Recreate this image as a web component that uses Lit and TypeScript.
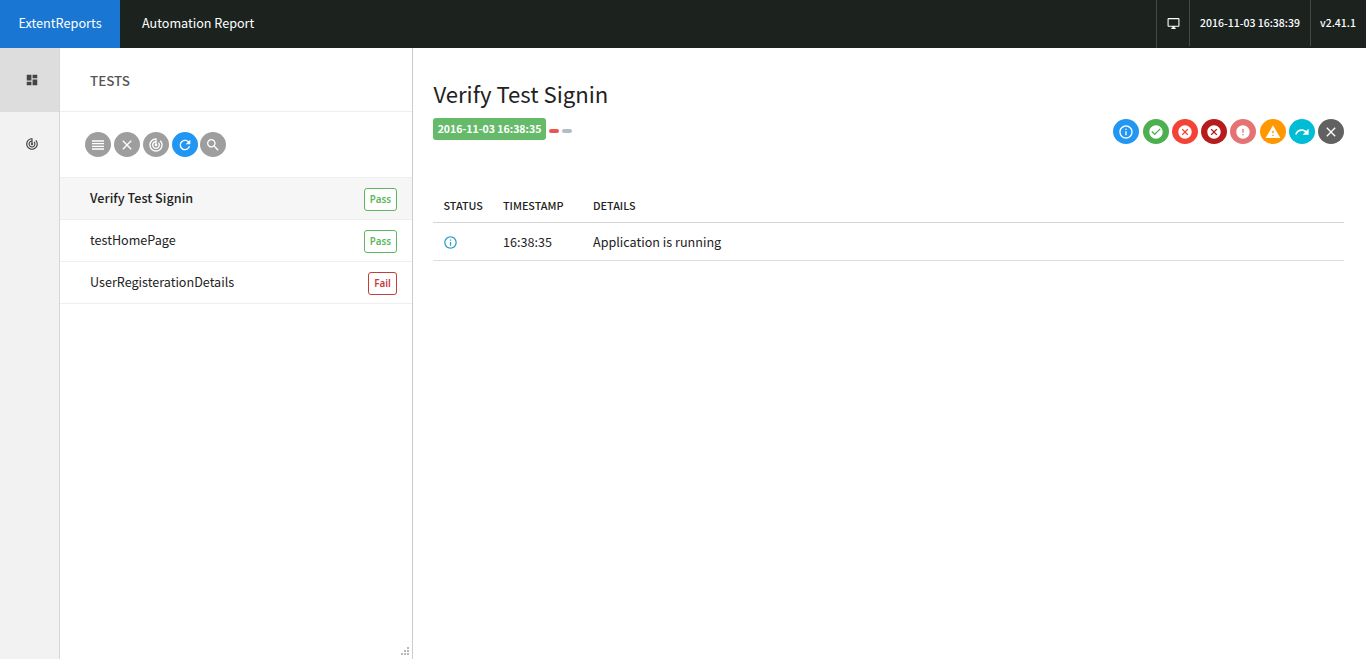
import { LitElement, html, css, svg } from "lit";
import { customElement, property, state } from "lit/decorators.js";
import { classMap } from "lit/directives/class-map.js";

const ICONS: Record<string, string> = {
  dashboard: "M3 13h8V3H3v10zm0 8h8v-6H3v6zm10 0h8V11h-8v10zm0-18v6h8V3h-8z",
  track:
    "M19.07 4.93l-1.41 1.41C19.1 7.79 20 9.79 20 12c0 4.42-3.58 8-8 8s-8-3.58-8-8c0-4.08 3.05-7.44 7-7.93v2.02C8.16 6.57 6 9.03 6 12c0 3.31 2.69 6 6 6s6-2.69 6-6c0-1.66-.67-3.16-1.76-4.24l-1.41 1.41C15.55 9.9 16 10.9 16 12c0 2.21-1.79 4-4 4s-4-1.79-4-4c0-1.86 1.28-3.41 3-3.86v2.14c-.6.35-1 .98-1 1.72 0 1.1.9 2 2 2s2-.9 2-2c0-.74-.4-1.38-1-1.72V2h-1C6.48 2 2 6.48 2 12s4.48 10 10 10 10-4.48 10-10c0-2.76-1.12-5.26-2.93-7.07z",
  lines: "M3 15h18v-2H3v2zm0 4h18v-2H3v2zm0-8h18V9H3v2zm0-6v2h18V5H3z",
  close:
    "M19 6.41L17.59 5 12 10.59 6.41 5 5 6.41 10.59 12 5 17.59 6.41 19 12 13.41 17.59 19 19 17.59 13.41 12z",
  refresh:
    "M17.65 6.35C16.2 4.9 14.21 4 12 4c-4.42 0-7.99 3.58-7.99 8s3.57 8 7.99 8c3.73 0 6.84-2.55 7.73-6h-2.08c-.82 2.33-3.04 4-5.65 4-3.31 0-6-2.69-6-6s2.69-6 6-6c1.66 0 3.14.69 4.22 1.78L13 11h7V4l-2.35 2.35z",
  search:
    "M15.5 14h-.79l-.28-.27C15.41 12.59 16 11.11 16 9.5 16 5.91 13.09 3 9.5 3S3 5.91 3 9.5 5.91 16 9.5 16c1.61 0 3.09-.59 4.23-1.57l.27.28v.79l5 4.99L20.49 19l-4.99-5zm-6 0C7.01 14 5 11.99 5 9.5S7.01 5 9.5 5 14 7.01 14 9.5 11.99 14 9.5 14z",
  info: "M11 17h2v-6h-2v6zm1-15C6.48 2 2 6.48 2 12s4.48 10 10 10 10-4.48 10-10S17.52 2 12 2zm0 18c-4.41 0-8-3.59-8-8s3.59-8 8-8 8 3.59 8 8-3.59 8-8 8zM11 9h2V7h-2v2z",
  check:
    "M12 2C6.48 2 2 6.48 2 12s4.48 10 10 10 10-4.48 10-10S17.52 2 12 2zm-2 15l-5-5 1.41-1.41L10 14.17l7.59-7.59L19 8l-9 9z",
  cancel:
    "M12 2C6.47 2 2 6.47 2 12s4.47 10 10 10 10-4.47 10-10S17.53 2 12 2zm5 13.59L15.59 17 12 13.41 8.41 17 7 15.59 10.59 12 7 8.41 8.41 7 12 10.59 15.59 7 17 8.41 13.41 12 17 15.59z",
  error:
    "M12 2C6.48 2 2 6.48 2 12s4.48 10 10 10 10-4.48 10-10S17.52 2 12 2zm1 15h-2v-2h2v2zm0-4h-2V7h2v6z",
  warning: "M1 21h22L12 2 1 21zm12-3h-2v-2h2v2zm0-4h-2v-4h2v4z",
  redo: "M18.4 10.6C16.55 8.99 14.15 8 11.5 8c-4.65 0-8.58 3.03-9.96 7.22L3.9 16c1.05-3.19 4.05-5.5 7.6-5.5 1.95 0 3.73.72 5.12 1.88L13 16h9V7l-3.6 3.6z",
  desktop:
    "M21 2H3c-1.1 0-2 .9-2 2v12c0 1.1.9 2 2 2h7v2H8v2h8v-2h-2v-2h7c1.1 0 2-.9 2-2V4c0-1.1-.9-2-2-2zm0 14H3V4h18v12z",
};

@customElement("md-icon")
export class MdIcon extends LitElement {
  @property() name = "";
  static styles = css`
    :host { display: block; width: 16px; height: 16px; flex: none; }
    svg { display: block; width: 100%; height: 100%; fill: currentColor; }
  `;
  render() {
    return html`<svg viewBox="0 0 24 24">${svg`<path d=${ICONS[this.name] ?? ""}></path>`}</svg>`;
  }
}

interface Test { name: string; status: "Pass" | "Fail"; }

@customElement("app-root")
export class AppRoot extends LitElement {
  @state() private selected = 0;

  private tests: Test[] = [
    { name: "Verify Test Signin", status: "Pass" },
    { name: "testHomePage", status: "Pass" },
    { name: "UserRegisterationDetails", status: "Fail" },
  ];
  private tools = ["lines", "close", "track", "refresh", "search"];
  private filters = [
    ["info", "blue"], ["check", "green"], ["cancel", "red"], ["cancel", "darkred"],
    ["error", "pink"], ["warning", "orange"], ["redo", "cyan"], ["close", "dark"],
  ];

  static styles = css`
    * { box-sizing: border-box; }
    :host {
      display: flex; flex-direction: column; height: 659px; overflow: hidden;
      background: #fff; color: #222; white-space: nowrap;
      font: 12.6px/20px "Noto Sans CJK SC", "Noto Sans", sans-serif;
    }
    .top { display: flex; height: 48px; background: #1c231f; color: #fff; line-height: 46px; flex: none; }
    .brand { width: 120px; background: #1976d2; text-align: center; font-size: 12.7px; }
    .title { padding-left: 22px; flex: 1; font-size: 12.6px; }
    .cell { height: 46px; border-left: 1px solid #444946; font-size: 10.5px; font-weight: 500; text-align: center; }
    .cell.screen { width: 33px; height: 48px; display: flex; justify-content: center; padding-top: 17px; }
    .cell.screen md-icon { width: 13px; height: 13px; }
    .cell.time { width: 121px; }
    .cell.ver { width: 56px; padding-right: 1px; }
    .body { display: flex; flex: 1; min-height: 0; }
    .nav { width: 60px; background: #f2f2f2; border-right: 1px solid #d6d6d6; }
    .nav-item { height: 64px; display: flex; align-items: center; justify-content: center; padding: 0 0 0 4px; color: #444; }
    .nav-item.on { background: #ddd; }
    .nav-item md-icon { width: 14px; height: 14px; }
    .list { width: 353px; border-right: 1px solid #ccc; display: flex; flex-direction: column; }
    .heading { height: 64px; padding: 22px 30px 0; border-bottom: 1px solid #eee; color: #555; font-weight: 500; font-size: 13.4px; }
    .tools { display: flex; gap: 3px; height: 66px; padding: 20px 0 0 25px; border-bottom: 1px solid #eee; }
    .round { width: 26px; height: 25px; border-radius: 50%; background: #9e9e9e; color: #fff; display: flex; align-items: center; justify-content: center; }
    .round.blue, .round.refresh { background: #2196f3; }
    .round.green { background: #4caf50; }
    .round.red { background: #f44336; }
    .round.darkred { background: #b71c1c; }
    .round.pink { background: #e57373; }
    .round.orange { background: #ff9800; }
    .round.cyan { background: #00bcd4; }
    .round.dark { background: #616161; }
    .round.search { margin-left: -1px; }
    .test { display: flex; justify-content: space-between; height: 42px; padding: 10px 15px 0 30px; border-bottom: 1px solid #eee; cursor: pointer; }
    .test.on { background: #f6f6f6; font-weight: 500; }
    .test.on .name { letter-spacing: 0.04px; }
    .label { height: 23px; width: 33px; text-align: center; border: 1px solid #5cb85c; color: #5cb85c; border-radius: 3px; line-height: 22px; font-family: "Noto Sans", sans-serif; font-size: 9.8px; font-weight: 600; background: #fff; }
    .label.fail { width: 29px; border-color: #c43c3c; color: #c43c3c; }
    .grip { margin: auto 3px 4px auto; display: block; fill: #b8b8b8; }
    .main { flex: 1; padding: 31px 22px 0 20px; }
    .head { display: flex; justify-content: space-between; }
    h1 { margin: 0; font-weight: 400; font-size: 22.15px; line-height: 28px; padding-left: 0.4px; }
    .meta { display: flex; align-items: center; gap: 3px; margin-top: 11px; }
    .stamp { height: 22px; width: 113px; text-align: center; border-radius: 3px; background: #66bb6a; color: #fff; font-weight: 700; font-size: 10.5px; line-height: 21px; }
    .dash { width: 10px; height: 4px; border-radius: 2px; background: #ef5350; margin-top: 4px; }
    .dash.grey { background: #b0bec5; }
    .filters { display: flex; gap: 3.22px; padding-top: 40px; }
    .grid { margin-top: 44px; }
    .row { display: grid; grid-template-columns: 59.5px 90px 1fr; padding-left: 10.5px; border-bottom: 1px solid #ddd; height: 38px; line-height: 38px; }
    .row.hd { height: 35px; line-height: 34px; font-size: 10.8px; font-weight: 500; border-color: #d5d5d5; }
    .row md-icon { width: 15px; height: 15px; color: #2aa0c8; margin: 12px 0 0 -1px; }
  `;

  render() {
    return html`
      <div class="top">
        <div class="brand">ExtentReports</div>
        <div class="title">Automation Report</div>
        <div class="cell screen"><md-icon name="desktop"></md-icon></div>
        <div class="cell time">2016-11-03 16:38:39</div>
        <div class="cell ver">v2.41.1</div>
      </div>
      <div class="body">
        <div class="nav">
          <div class="nav-item on"><md-icon name="dashboard"></md-icon></div>
          <div class="nav-item"><md-icon name="track"></md-icon></div>
        </div>
        <div class="list">
          <div class="heading">TESTS</div>
          <div class="tools">
            ${this.tools.map((t) => html`<div class="round ${t}"><md-icon name=${t}></md-icon></div>`)}
          </div>
          ${this.tests.map(
            (t, i) => html`<div class=${classMap({ test: true, on: i === this.selected })} @click=${() => (this.selected = i)}>
              <span class="name">${t.name}</span>
              <span class=${classMap({ label: true, fail: t.status === "Fail" })}>${t.status}</span>
            </div>`
          )}
          <svg class="grip" width="8" height="8">
            <path d="M6 0h2v2h-2zM3 3h2v2h-2zM6 3h2v2h-2zM0 6h2v2h-2zM3 6h2v2h-2zM6 6h2v2h-2z"></path>
          </svg>
        </div>
        <div class="main">
          <div class="head">
            <div>
              <h1>${this.tests[this.selected].name}</h1>
              <div class="meta">
                <span class="stamp">2016-11-03 16:38:35</span><span class="dash"></span><span class="dash grey"></span>
              </div>
            </div>
            <div class="filters">
              ${this.filters.map(([n, c]) => html`<div class="round ${c}"><md-icon name=${n}></md-icon></div>`)}
            </div>
          </div>
          <div class="grid">
            <div class="row hd"><span>STATUS</span><span>TIMESTAMP</span><span>DETAILS</span></div>
            <div class="row"><md-icon name="info"></md-icon><span>16:38:35</span><span>Application is running</span></div>
          </div>
        </div>
      </div>
    `;
  }
}
